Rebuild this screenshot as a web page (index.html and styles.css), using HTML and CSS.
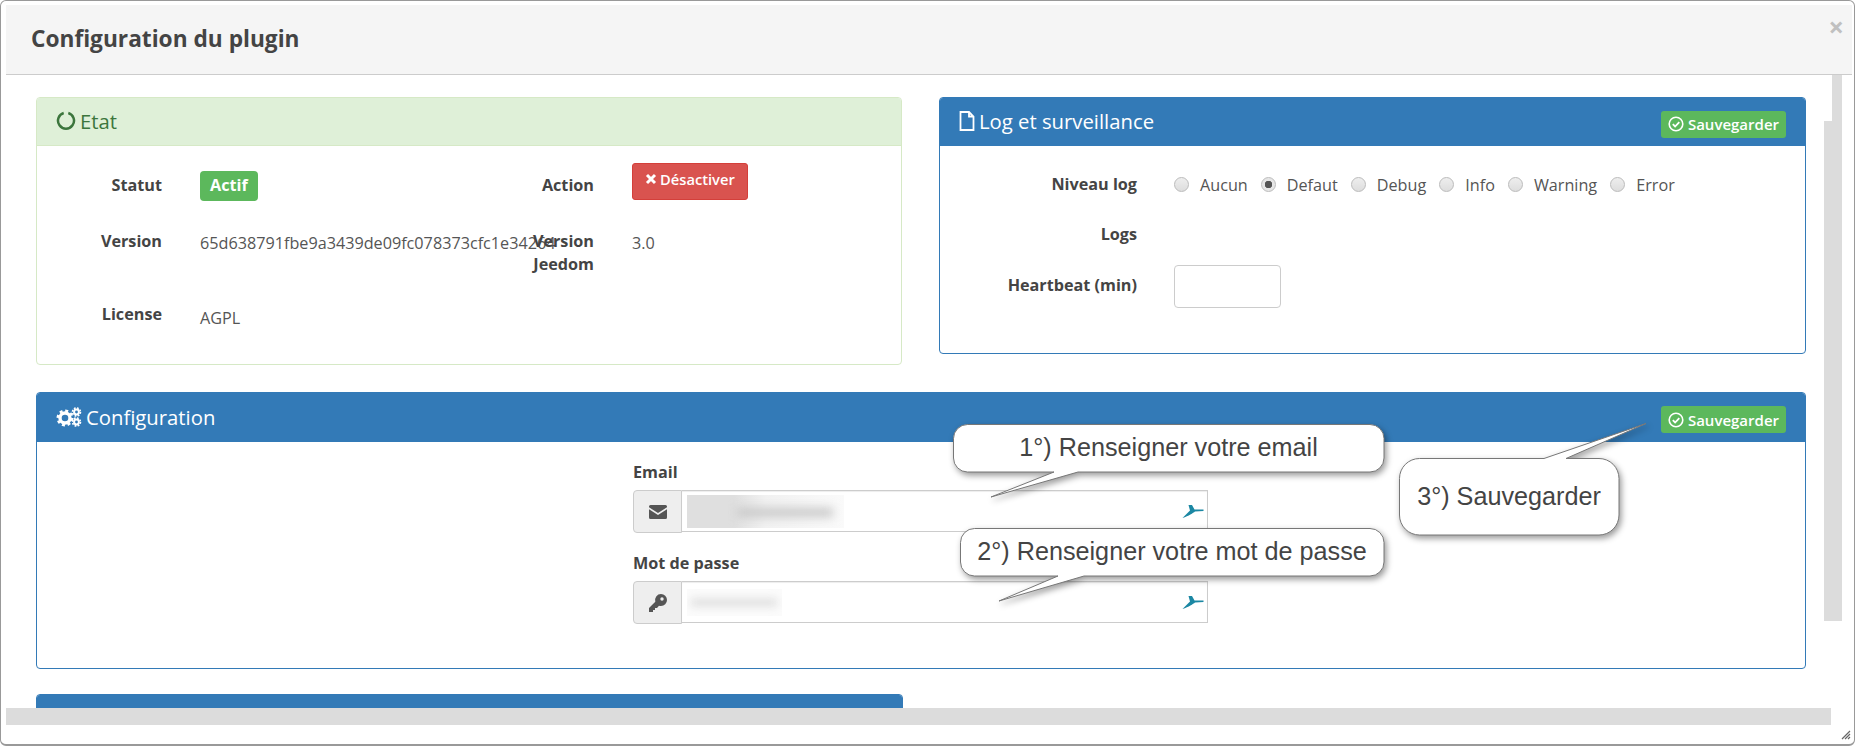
FILE: index.html
```html
<!DOCTYPE html>
<html>

	<head>
		<meta charset="utf-8">
		<title>Configuration du plugin</title>
		<link rel="stylesheet" href="styles.css">
	</head>

	<body>
		<div class="dialog">
			<div class="dialog-head">
				<h4>Configuration du plugin</h4>
				<span class="close">×</span>
			</div>

			<div class="dialog-body">
				<div class="top-row">
					<div class="panel panel-green panel-etat">
						<div class="panel-head">
							<svg class="ico" width="20" height="20" viewBox="0 0 20 20"><path d="M12.300 2A8 8 0 1 1 7.700 2" fill="none" stroke="#3c763d" stroke-width="2.500"/></svg>
							<span>Etat</span>
						</div>
						<div class="etat-grid">
							<div class="lbl">Statut</div>
							<div><span class="badge-ok">Actif</span></div>
							<div class="lbl">Action</div>
							<div><span class="btn-off"><svg width="12" height="12" viewBox="0 0 12 12"><path d="M2 2l8 8M10 2l-8 8" stroke="#fff" stroke-width="3"/></svg>Désactiver</span></div>

							<div class="lbl">Version</div>
							<div class="val val-nowrap">65d638791fbe9a3439de09fc078373cfc1e34264</div>
							<div class="lbl">Version Jeedom</div>
							<div class="val">3.0</div>

							<div class="lbl">License</div>
							<div class="val val-low">AGPL</div>
						</div>
					</div>

					<div class="panel panel-blue panel-log">
						<div class="panel-head">
							<svg class="ico" width="16" height="20" viewBox="0 0 16 20"><path d="M1.500 1h8.500l4.500 4.500V19h-13zM10 1v4.500h4.500" fill="none" stroke="#fff" stroke-width="1.800"/></svg>
							<span>Log et surveillance</span>
							<span class="btn-save"><svg width="16" height="16" viewBox="0 0 16 16"><circle cx="8" cy="8" r="6.800" fill="none" stroke="#fff" stroke-width="1.600"/><path d="M4.800 8.200l2.300 2.300 4.200-4.400" fill="none" stroke="#fff" stroke-width="1.800"/></svg>Sauvegarder</span>
						</div>
						<div class="log-body">
							<div class="log-row log-row-first">
								<div class="lbl">Niveau log</div>
								<div class="radios">
									<label class="radio"><i></i>Aucun</label>
									<label class="radio radio-on"><i></i>Defaut</label>
									<label class="radio"><i></i>Debug</label>
									<label class="radio"><i></i>Info</label>
									<label class="radio"><i></i>Warning</label>
									<label class="radio"><i></i>Error</label>
								</div>
							</div>
							<div class="log-row log-row-logs">
								<div class="lbl">Logs</div>
							</div>
							<div class="log-row">
								<div class="lbl">Heartbeat (min)</div>
								<div class="small-input"></div>
							</div>
						</div>
					</div>
				</div>

				<div class="panel panel-blue panel-config">
					<div class="panel-head">
						<svg class="ico" width="26" height="20" viewBox="0 0 26 20">
							<circle cx="9" cy="11" r="5" fill="none" stroke="#fff" stroke-width="3.400"/>
							<circle cx="9" cy="11" r="7.300" fill="none" stroke="#fff" stroke-width="2.400" stroke-dasharray="3 2.730"/>
							<circle cx="20.500" cy="5" r="2.400" fill="none" stroke="#fff" stroke-width="2"/>
							<circle cx="20.500" cy="5" r="4" fill="none" stroke="#fff" stroke-width="1.600" stroke-dasharray="1.800 1.340"/>
							<circle cx="20.500" cy="15" r="2.400" fill="none" stroke="#fff" stroke-width="2"/>
							<circle cx="20.500" cy="15" r="4" fill="none" stroke="#fff" stroke-width="1.600" stroke-dasharray="1.800 1.340"/>
						</svg>
						<span>Configuration</span>
						<span class="btn-save"><svg width="16" height="16" viewBox="0 0 16 16"><circle cx="8" cy="8" r="6.800" fill="none" stroke="#fff" stroke-width="1.600"/><path d="M4.800 8.200l2.300 2.300 4.200-4.400" fill="none" stroke="#fff" stroke-width="1.800"/></svg>Sauvegarder</span>
					</div>
					<div class="config-body">
						<div class="field">
							<div class="field-lbl">Email</div>
							<div class="input-group">
								<span class="addon"><svg width="18" height="14" viewBox="0 0 18 14"><path d="M1.500 0h15A1.500 1.500 0 0 1 18 1.500v.8L9 8 0 2.300v-.8A1.500 1.500 0 0 1 1.500 0zM0 4.300L9 10l9-5.700v8.200a1.500 1.500 0 0 1-1.500 1.500h-15A1.500 1.500 0 0 1 0 12.500z" fill="#555"/></svg></span>
								<span class="input">
									<span class="blur-mail"><b></b></span>
									<svg class="fill-mark" width="22" height="18" viewBox="0 0 22 18"><path d="M.5 16L8 8.500 6.500 3H10L12.500 7.500H21.500V9L13 9.500C11 11 7 14 .5 16z" fill="#1b87a3"/></svg>
								</span>
							</div>
						</div>
						<div class="field">
							<div class="field-lbl">Mot de passe</div>
							<div class="input-group">
								<span class="addon"><svg width="18" height="18" viewBox="0 0 18 18"><path d="M12 0a6 6 0 0 1 0 12 6 6 0 0 1-2-.3L8 14H6v2H4v2H0v-4l6.300-6.300A6 6 0 0 1 12 0z" fill="#555"/><circle cx="13" cy="5" r="1.700" fill="#eee"/></svg></span>
								<span class="input">
									<span class="blur-pass"><b></b></span>
									<svg class="fill-mark" width="22" height="18" viewBox="0 0 22 18"><path d="M.5 16L8 8.500 6.500 3H10L12.500 7.500H21.500V9L13 9.500C11 11 7 14 .5 16z" fill="#1b87a3"/></svg>
								</span>
							</div>
						</div>
					</div>
				</div>

				<div class="panel panel-blue panel-next">
					<div class="panel-head"></div>
				</div>
			</div>

			<div class="hbar"></div>
			<div class="dialog-foot"></div>

			<div class="vbar"></div>
			<svg class="grip" width="10" height="10" viewBox="0 0 10 10"><path d="M1 9l8-8M4 9l5-5M7 9l2-2" stroke="#666" stroke-width="1.200"/></svg>

			<!-- annotations drawn over the screenshot -->
			<div class="note note-1">
				<svg width="440" height="80" viewBox="0 0 440 80"><path class="note-shape" d="M14.500 .5H417a14 14 0 0 1 14 14V34a14 14 0 0 1-14 14H125L38 73 101 48H14.500a14 14 0 0 1-14-14V14.500a14 14 0 0 1 14-14z"/></svg>
				<span class="note-text">1°) Renseigner votre email</span>
			</div>
			<div class="note note-2">
				<svg width="440" height="80" viewBox="0 0 440 80"><path class="note-shape" d="M14.500 .5H410a14 14 0 0 1 14 14V34a14 14 0 0 1-14 14H124L39 73 98 48H14.500a14 14 0 0 1-14-14V14.500a14 14 0 0 1 14-14z"/></svg>
				<span class="note-text">2°) Renseigner votre mot de passe</span>
			</div>
			<div class="note note-3">
				<svg width="270" height="120" viewBox="0 0 270 120"><path class="note-shape" d="M20.500 35.500H145L247 .5 167 35.500H200a20 20 0 0 1 20 20V92a20 20 0 0 1-20 20H20.500a20 20 0 0 1-20-20V55.500a20 20 0 0 1 20-20z"/></svg>
				<span class="note-text">3°) Sauvegarder</span>
			</div>
		</div>
	</body>

</html>
```

FILE: styles.css
```css
* {
	margin: 0;
	padding: 0;
	box-sizing: border-box;
}

html,
body {
	width: 1855px;
	height: 747px;
	overflow: hidden;
	background: #fff;
}

body {
	font-family: "Open Sans", sans-serif;
	font-size: 16.200px;
	color: #555;
}

.dialog {
	position: relative;
	width: 1855px;
	height: 746px;
	padding: 4px 2px 0 5px;
	display: flex;
	flex-direction: column;
	background: #fff;
	border: 1px solid #999;
	border-width: 1px 1px 2px 1px;
	border-radius: 6px;
}

.dialog-head {
	height: 70px;
	flex: none;
	display: flex;
	align-items: center;
	justify-content: space-between;
	padding: 0 8px 2px 25px;
	background: #f5f5f5;
	border-bottom: 1px solid #ccc;
}

.dialog-head h4 {
	font-size: 22.700px;
	font-weight: 700;
	color: #444;
}

.close {
	align-self: flex-start;
	margin-top: 7px;
	font-size: 27px;
	line-height: 30px;
	font-weight: 700;
	color: #c0c0c0;
}

.dialog-body {
	height: 633px;
	flex: none;
	overflow: hidden;
	padding: 22px 0 0 30px;
}

.hbar {
	width: 1825px;
	height: 17px;
	flex: none;
	background: #dcdcdc;
}

.dialog-foot {
	flex: 1;
}

.vbar {
	position: absolute;
	right: 12px;
	top: 120px;
	width: 18px;
	height: 500px;
	background: #dcdcdc;
}

.vbar::before {
	content: "";
	position: absolute;
	right: 0;
	top: -46px;
	width: 10px;
	height: 46px;
	background: #dcdcdc;
}

.grip {
	position: absolute;
	right: 3px;
	bottom: 4px;
}

/* panels */
.top-row {
	display: flex;
	align-items: flex-start;
	gap: 37px;
}

.panel {
	border: 1px solid #337ab7;
	border-radius: 4px;
	overflow: hidden;
	background: #fff;
}

.panel-head {
	height: 48px;
	display: flex;
	align-items: center;
	padding: 0 19px 2px 19px;
	font-size: 20.300px;
	color: #fff;
	background: #337ab7;
}

.ico {
	margin-right: 4px;
	flex: none;
}

.panel-green {
	border-color: #d6e9c6;
}

.panel-green .panel-head {
	background: #dff0d8;
	color: #3c763d;
	border-bottom: 1px solid #d6e9c6;
}

.panel-etat {
	width: 866px;
	height: 268px;
}

.panel-log {
	width: 867px;
	height: 257px;
}

.panel-config {
	width: 1770px;
	height: 277px;
	margin-top: 27px;
}

.panel-config .panel-head {
	height: 49px;
}

.panel-next {
	width: 867px;
	height: 60px;
	margin-top: 25px;
}

/* etat */
.etat-grid {
	display: grid;
	grid-template-columns: 124px 268px 88px 1fr;
	grid-template-rows: 56px 73px auto;
	column-gap: 38px;
	padding: 17px 0 0 1px;
}

.lbl {
	font-weight: 700;
	font-size: 16.200px;
	line-height: 23px;
	padding-top: 11px;
	text-align: right;
	color: #444;
}

.val {
	padding-top: 13px;
	line-height: 23px;
}

.val-nowrap {
	white-space: nowrap;
}

.val-low {
	padding-top: 15px;
}

.badge-ok {
	display: inline-block;
	margin-top: 8px;
	padding: 0 10px;
	height: 30px;
	line-height: 29px;
	font-weight: 700;
	font-size: 16.200px;
	color: #fff;
	background: #5cb85c;
	border-radius: 4px;
}

.btn-off {
	display: inline-flex;
	align-items: center;
	gap: 3px;
	height: 37px;
	padding: 0 12px 6px 12px;
	font-size: 14.700px;
	font-weight: 600;
	color: #fff;
	background: #d9534f;
	border: 1px solid #d43f3a;
	border-radius: 3px;
}

.btn-save {
	margin-left: auto;
	display: inline-flex;
	align-items: center;
	gap: 4px;
	height: 27px;
	margin-top: 6px;
	padding: 0 7px;
	font-size: 15px;
	font-weight: 600;
	color: #fff;
	background: #5cb85c;
	border-radius: 3px;
}

/* log */
.log-body {
	padding-top: 27px;
}

.log-row {
	display: flex;
	gap: 37px;
}

.log-row .lbl {
	width: 197px;
	padding-top: 0;
}

.log-row-first {
	height: 50px;
}

.log-row-logs {
	height: 51px;
}

.radios {
	display: flex;
	align-items: center;
	height: 23px;
	gap: 13px;
}

.radio {
	display: flex;
	align-items: center;
	gap: 11px;
}

.radio i {
	width: 15px;
	height: 15px;
	border-radius: 50%;
	border: 1px solid #bbb;
	background: linear-gradient(#eee, #ddd);
}

.radio-on i {
	background: radial-gradient(circle, #555 0, #555 3.500px, #e6e6e6 4px);
}

.small-input {
	width: 107px;
	height: 43px;
	margin-top: -9px;
	border: 1px solid #ccc;
	border-radius: 4px;
}

/* config */
.config-body {
	padding: 19px 0 0 596px;
}

.field {
	width: 575px;
	margin-bottom: 19px;
}

.field-lbl {
	font-size: 16.200px;
	line-height: 23px;
	font-weight: 700;
	color: #444;
	margin-bottom: 6px;
}

.input-group {
	display: flex;
	height: 43px;
}

.addon {
	width: 49px;
	flex: none;
	display: flex;
	align-items: center;
	justify-content: center;
	background: #eee;
	border: 1px solid #ccc;
	border-radius: 4px 0 0 4px;
}

.input {
	flex: 1;
	height: 42px;
	display: flex;
	align-items: center;
	justify-content: space-between;
	padding: 0 3px 0 5px;
	border: 1px solid #ccc;
	border-left: 0;
	box-shadow: inset 0 1px 1px rgba(0, 0, 0, .075);
}

.blur-mail {
	position: relative;
	display: block;
	width: 157px;
	height: 33px;
	overflow: hidden;
	background: linear-gradient(90deg, #dfdfdf 0, #dfdfdf 30%, #f1f1f1 50%, #fafafa 100%);
}

.blur-mail b {
	position: absolute;
	left: 50px;
	top: 13px;
	width: 96px;
	height: 9px;
	background: #c8c8c8;
	filter: blur(5px);
}

.blur-pass {
	position: relative;
	display: block;
	width: 95px;
	height: 27px;
	overflow: hidden;
	background: #fbfbfb;
}

.blur-pass b {
	position: absolute;
	left: 4px;
	top: 10px;
	width: 86px;
	height: 7px;
	background: #dcdcdc;
	filter: blur(4px);
}

/* annotations */
.note {
	position: absolute;
}

.note svg {
	display: block;
	overflow: visible;
	filter: drop-shadow(2px 3px 3px rgba(0, 0, 0, .4));
}

.note-shape {
	fill: #fff;
	stroke: #777;
	stroke-width: 1;
}

.note-text {
	position: absolute;
	left: 0;
	font-family: "Liberation Sans", Arial, sans-serif;
	font-size: 25.200px;
	line-height: 48px;
	color: #444;
	text-align: center;
	white-space: nowrap;
}

.note-1 {
	left: 952px;
	top: 423px;
}

.note-1 .note-text {
	top: -1px;
	width: 431px;
}

.note-2 {
	left: 959px;
	top: 527px;
}

.note-2 .note-text {
	top: -1px;
	width: 424px;
}

.note-3 {
	left: 1398px;
	top: 422px;
}

.note-3 .note-text {
	top: 49px;
	width: 220px;
}
```
